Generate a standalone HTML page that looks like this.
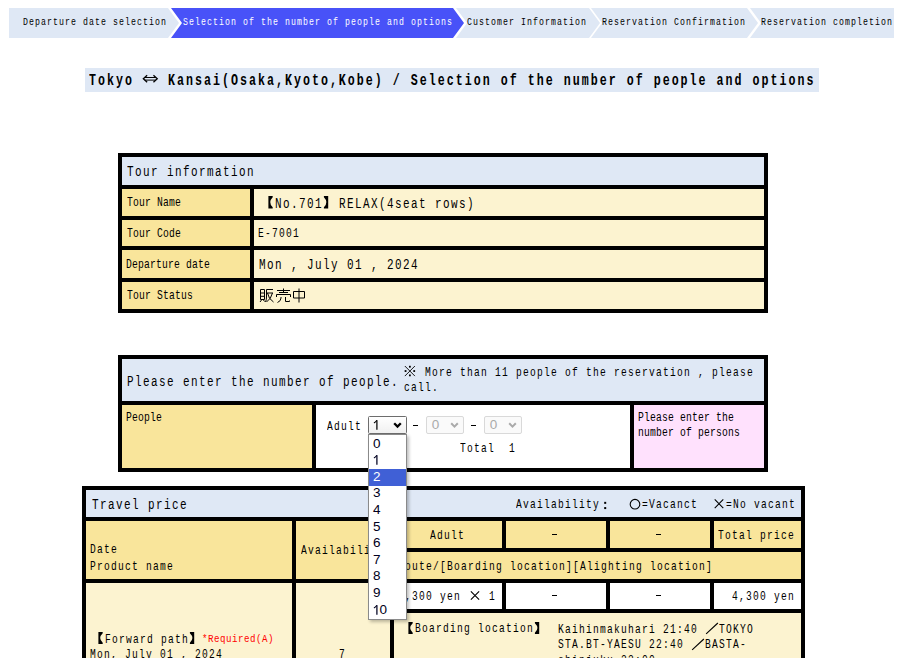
<!DOCTYPE html>
<html><head><meta charset="utf-8"><style>
html,body{margin:0;padding:0;background:#fff;}
body{width:897px;height:658px;overflow:hidden;position:relative;}
.t{position:absolute;white-space:pre;font-family:"Liberation Mono",monospace;line-height:20px;transform-origin:0 0;}
.s{position:absolute;font-family:"Liberation Sans",sans-serif;font-size:13.5px;line-height:16px;}
svg{display:block}
</style></head><body>
<svg style="position:absolute;left:0;top:0" width="897" height="50"><polygon points="9,8 168,8 179,23 168,38 9,38" fill="#dfe8f5"/><polygon points="171,8 453,8 464,23 453,38 171,38 182,23" fill="#4852f8"/><polygon points="456,8 589,8 600,23 589,38 456,38 467,23" fill="#dfe8f5"/><polygon points="591,8 747,8 758,23 747,38 591,38 602,23" fill="#dfe8f5"/><polygon points="750,8 894,8 894,38 750,38 761,23" fill="#dfe8f5"/></svg>
<div class="t" style="left:23.35px;top:12.01px;font-size:10.48px;letter-spacing:1.353px;transform:scaleX(0.7855);color:#000;">Departure date selection</div>
<div class="t" style="left:182.68px;top:12.01px;font-size:10.48px;letter-spacing:1.353px;transform:scaleX(0.7855);color:#ffffff;">Selection of the number of people and options</div>
<div class="t" style="left:467.25px;top:12.01px;font-size:10.48px;letter-spacing:1.353px;transform:scaleX(0.7855);color:#000;">Customer Information</div>
<div class="t" style="left:602.35px;top:12.01px;font-size:10.48px;letter-spacing:1.353px;transform:scaleX(0.7855);color:#000;">Reservation Confirmation</div>
<div class="t" style="left:761.35px;top:12.01px;font-size:10.48px;letter-spacing:1.353px;transform:scaleX(0.7855);color:#000;">Reservation completion</div>
<div style="position:absolute;left:85px;top:68px;width:734px;height:24px;background:#dfe8f5;"></div>
<div class="t" style="left:88.65px;top:70.64px;font-size:15.64px;letter-spacing:2.692px;transform:scaleX(0.7452);color:#000;font-weight:bold;">Tokyo </div>
<svg style="position:absolute;left:142.65px;top:74.50px;overflow:visible" width="16.40" height="7.62" viewBox="0 0 16.40 7.62" fill="none" stroke="#000"><path d="M1.83 2.51 L12.77 2.51 M1.83 5.11 L12.77 5.11" stroke-width="1.0"/><path d="M4.14 0.3 L0.33 3.81 L4.14 7.32 M10.46 0.3 L14.27 3.81 L10.46 7.32" stroke-width="1.3"/></svg>
<div class="t" style="left:159.05px;top:70.64px;font-size:15.64px;letter-spacing:2.692px;transform:scaleX(0.7452);color:#000;font-weight:bold;"> Kansai(Osaka,Kyoto,Kobe) / Selection of the number of people and options</div>
<div style="position:absolute;left:118px;top:153px;width:650px;height:160px;background:#000;"></div>
<div style="position:absolute;left:122px;top:157px;width:642px;height:28px;background:#dfe8f5;"></div>
<div class="t" style="left:127.09px;top:161.90px;font-size:14.67px;letter-spacing:1.894px;transform:scaleX(0.7481);color:#000;">Tour information</div>
<div style="position:absolute;left:122px;top:189px;width:128px;height:27px;background:#f9e59b;"></div>
<div style="position:absolute;left:254px;top:189px;width:510px;height:27px;background:#fcf3d0;"></div>
<div class="t" style="left:126.64px;top:193.35px;font-size:12.57px;letter-spacing:0.222px;transform:scaleX(0.7728);color:#000;">Tour Name</div>
<div style="position:absolute;left:122px;top:220px;width:128px;height:26px;background:#f9e59b;"></div>
<div style="position:absolute;left:254px;top:220px;width:510px;height:26px;background:#fcf3d0;"></div>
<div class="t" style="left:126.64px;top:223.85px;font-size:12.57px;letter-spacing:0.222px;transform:scaleX(0.7728);color:#000;">Tour Code</div>
<div style="position:absolute;left:122px;top:250px;width:128px;height:28px;background:#f9e59b;"></div>
<div style="position:absolute;left:254px;top:250px;width:510px;height:28px;background:#fcf3d0;"></div>
<div class="t" style="left:126.23px;top:254.85px;font-size:12.57px;letter-spacing:0.222px;transform:scaleX(0.7728);color:#000;">Departure date</div>
<div style="position:absolute;left:122px;top:282px;width:128px;height:27px;background:#f9e59b;"></div>
<div style="position:absolute;left:254px;top:282px;width:510px;height:27px;background:#fcf3d0;"></div>
<div class="t" style="left:126.64px;top:286.35px;font-size:12.57px;letter-spacing:0.222px;transform:scaleX(0.7728);color:#000;">Tour Status</div>
<svg style="position:absolute;left:259.00px;top:196.20px;overflow:visible" width="16.00" height="12.50" viewBox="0 0 16.00 12.50" fill="none" stroke="#000"><path d="M9.40 0 L13.70 0 L13.70 1.20 Q8.70 6.25 13.70 11.30 L13.70 12.50 L9.40 12.50 Z" fill="#000" stroke="none"/></svg>
<div class="t" style="left:275.00px;top:193.78px;font-size:13.97px;letter-spacing:1.804px;transform:scaleX(0.7855);color:#000;">No.701</div>
<svg style="position:absolute;left:323.00px;top:196.20px;overflow:visible" width="16.00" height="12.50" viewBox="0 0 16.00 12.50" fill="none" stroke="#000"><path d="M0.90 0 L5.20 0 L5.20 12.50 L0.90 12.50 L0.90 11.30 Q5.90 6.25 0.90 1.20 Z" fill="#000" stroke="none"/></svg>
<div class="t" style="left:339.00px;top:193.78px;font-size:13.97px;letter-spacing:1.804px;transform:scaleX(0.7855);color:#000;">RELAX(4seat rows)</div>
<div class="t" style="left:257.94px;top:223.89px;font-size:13.55px;letter-spacing:1.750px;transform:scaleX(0.7086);color:#000;">E-7001</div>
<div class="t" style="left:258.71px;top:255.08px;font-size:13.97px;letter-spacing:1.804px;transform:scaleX(0.7855);color:#000;">Mon , July 01 , 2024</div>
<svg style="position:absolute;left:258.50px;top:287.90px;overflow:visible" width="16.00" height="16.00" viewBox="0 0 16.00 16.00" fill="none" stroke="#000"><g transform="scale(1.0000)" stroke-width="1.000" ><path d="M1.5 1.5H5.5V11.5H1.5Z M1.5 5H5.5 M1.5 8.3H5.5 M2.5 12L1 14 M4.5 12L5.5 13.5 M7.5 1.5H14 M7.5 1.5V9Q7.5 12 6.5 14 M7.5 5H14 M8.5 5Q9.5 11 14.5 14 M13.5 5Q12 11 7.5 14"/></g></svg>
<svg style="position:absolute;left:274.50px;top:287.90px;overflow:visible" width="16.00" height="16.00" viewBox="0 0 16.00 16.00" fill="none" stroke="#000"><g transform="scale(1.0000)" stroke-width="1.000" ><path d="M8.5 0.5V4 M2 2.5H15 M4 4.5H13 M1.5 6.5H15.5V9 M1.5 6.5V9 M6 9V10Q6 13 2.5 14.5 M10.5 9V13.5H14.5V12.5"/></g></svg>
<svg style="position:absolute;left:290.50px;top:287.90px;overflow:visible" width="16.00" height="16.00" viewBox="0 0 16.00 16.00" fill="none" stroke="#000"><g transform="scale(1.0000)" stroke-width="1.000" ><path d="M2.5 3.5H13.5V10H2.5Z M8 0.5V14.5"/></g></svg>
<div style="position:absolute;left:118px;top:355px;width:650px;height:117px;background:#000;"></div>
<div style="position:absolute;left:122px;top:359px;width:642px;height:42px;background:#dfe8f5;"></div>
<div class="t" style="left:126.73px;top:371.60px;font-size:14.67px;letter-spacing:1.894px;transform:scaleX(0.7481);color:#000;">Please enter the number of people.</div>
<svg style="position:absolute;left:404.00px;top:365.75px;overflow:visible" width="14.00" height="10.08" viewBox="0 0 14.00 10.08" fill="none" stroke="#000"><path d="M0.84 0.00 L10.92 10.08 M10.92 0.00 L0.84 10.08" stroke-width="0.9"/><rect x="4.98" y="-0.19" width="1.8" height="1.8" fill="#000" stroke="none"/><rect x="4.98" y="8.47" width="1.8" height="1.8" fill="#000" stroke="none"/><rect x="0.65" y="4.14" width="1.8" height="1.8" fill="#000" stroke="none"/><rect x="9.31" y="4.14" width="1.8" height="1.8" fill="#000" stroke="none"/></svg>
<div class="t" style="left:418.00px;top:362.77px;font-size:13.27px;letter-spacing:1.714px;transform:scaleX(0.7235);color:#000;"> More than 11 people of the reservation , please</div>
<div class="t" style="left:403.89px;top:378.27px;font-size:13.27px;letter-spacing:1.714px;transform:scaleX(0.7235);color:#000;">call.</div>
<div style="position:absolute;left:122px;top:405px;width:190px;height:63px;background:#f9e59b;"></div>
<div style="position:absolute;left:316px;top:405px;width:314px;height:63px;background:#ffffff;"></div>
<div style="position:absolute;left:634px;top:405px;width:130px;height:63px;background:#ffe1fd;"></div>
<div class="t" style="left:126.23px;top:408.44px;font-size:11.87px;letter-spacing:0.210px;transform:scaleX(0.8183);color:#000;">People</div>
<div class="t" style="left:637.73px;top:408.24px;font-size:11.87px;letter-spacing:0.210px;transform:scaleX(0.8183);color:#000;">Please enter the</div>
<div class="t" style="left:637.65px;top:423.14px;font-size:11.87px;letter-spacing:0.210px;transform:scaleX(0.8183);color:#000;">number of persons</div>
<div class="t" style="left:327.00px;top:417.19px;font-size:13.55px;letter-spacing:1.750px;transform:scaleX(0.7086);color:#000;">Adult</div>
<div class="t" style="left:459.64px;top:439.47px;font-size:13.27px;letter-spacing:1.714px;transform:scaleX(0.7235);color:#000;">Total  1</div>
<div style="position:absolute;left:413px;top:425px;width:5px;height:1px;background:#000;"></div>
<div style="position:absolute;left:471px;top:425px;width:5px;height:1px;background:#000;"></div>
<div style="position:absolute;left:368px;top:416px;width:37px;height:16px;border:1px solid #6d6d6d;border-radius:1.5px;background:linear-gradient(#fff,#f0f0f0)"></div>
<svg style="position:absolute;left:373.30px;top:420.10px;overflow:visible" width="8.00" height="10.00" viewBox="0 0 8.00 10.00" fill="none" stroke="#000"><path d="M3.90 0.2 V9.8" stroke-width="1.25"/><path d="M3.90 0.3 Q2.60 2.2 0.90 2.9" stroke-width="1.1"/></svg>
<svg style="position:absolute;left:392.50px;top:421.50px;overflow:visible" width="9.00" height="7.00" viewBox="0 0 9.00 7.00" fill="none" stroke="#000"><path d="M1.2 1.3L4.5 4.6L7.8 1.3" stroke-width="2.3"/></svg>
<div style="position:absolute;left:426px;top:416px;width:36px;height:16px;border:1px solid #d9d9d9;border-radius:2px;background:#fafafa"></div>
<div class="s" style="left:431.8px;top:417px;color:#aaa">0</div>
<svg style="position:absolute;left:450.20px;top:421.50px;overflow:visible" width="9.50" height="7.00" viewBox="0 0 9.50 7.00" fill="none" stroke="#aaa"><path d="M1.2 1.3L4.5 4.6L7.8 1.3" stroke-width="2"/></svg>
<div style="position:absolute;left:484px;top:416px;width:36px;height:16px;border:1px solid #d9d9d9;border-radius:2px;background:#fafafa"></div>
<div class="s" style="left:489.8px;top:417px;color:#aaa">0</div>
<svg style="position:absolute;left:508.20px;top:421.50px;overflow:visible" width="9.50" height="7.00" viewBox="0 0 9.50 7.00" fill="none" stroke="#aaa"><path d="M1.2 1.3L4.5 4.6L7.8 1.3" stroke-width="2"/></svg>
<div style="position:absolute;left:82px;top:486px;width:723px;height:172px;background:#000;"></div>
<div style="position:absolute;left:86px;top:490px;width:715px;height:27px;background:#dfe8f5;"></div>
<div class="t" style="left:91.59px;top:494.90px;font-size:14.67px;letter-spacing:1.894px;transform:scaleX(0.7481);color:#000;">Travel price</div>
<div class="t" style="left:515.50px;top:495.07px;font-size:13.27px;letter-spacing:1.714px;transform:scaleX(0.7235);color:#000;">Availability</div>
<svg style="position:absolute;left:599.50px;top:499.10px;overflow:visible" width="14.00" height="9.50" viewBox="0 0 14.00 9.50" fill="none" stroke="#000"><rect x="4.20" y="2.85" width="2" height="2" fill="#000" stroke="none"/><rect x="4.20" y="8.07" width="2" height="2" fill="#000" stroke="none"/></svg>
<svg style="position:absolute;left:627.50px;top:498.91px;overflow:visible" width="14.00" height="10.45" viewBox="0 0 14.00 10.45" fill="none" stroke="#000"><circle cx="7.00" cy="5.23" r="4.81" stroke-width="1.1"/></svg>
<div class="t" style="left:641.50px;top:495.07px;font-size:13.27px;letter-spacing:1.714px;transform:scaleX(0.7235);color:#000;">=Vacanct</div>
<svg style="position:absolute;left:711.50px;top:499.39px;overflow:visible" width="14.00" height="9.50" viewBox="0 0 14.00 9.50" fill="none" stroke="#000"><path d="M2.72 0.47 L11.28 9.03 M11.28 0.47 L2.72 9.03" stroke-width="1.1"/></svg>
<div class="t" style="left:725.50px;top:495.07px;font-size:13.27px;letter-spacing:1.714px;transform:scaleX(0.7235);color:#000;">=No vacant</div>
<div style="position:absolute;left:86px;top:521px;width:206px;height:58px;background:#f9e59b;"></div>
<div style="position:absolute;left:296px;top:521px;width:94px;height:58px;background:#f9e59b;"></div>
<div style="position:absolute;left:394px;top:521px;width:108px;height:27px;background:#f9e59b;"></div>
<div style="position:absolute;left:506px;top:521px;width:100px;height:27px;background:#f9e59b;"></div>
<div style="position:absolute;left:610px;top:521px;width:100px;height:27px;background:#f9e59b;"></div>
<div style="position:absolute;left:714px;top:521px;width:87px;height:27px;background:#f9e59b;"></div>
<div style="position:absolute;left:394px;top:552px;width:407px;height:27px;background:#f9e59b;"></div>
<div class="t" style="left:89.94px;top:540.47px;font-size:13.27px;letter-spacing:1.714px;transform:scaleX(0.7235);color:#000;">Date</div>
<div class="t" style="left:89.94px;top:556.67px;font-size:13.27px;letter-spacing:1.714px;transform:scaleX(0.7235);color:#000;">Product name</div>
<div class="t" style="left:300.70px;top:541.02px;font-size:13.27px;letter-spacing:1.714px;transform:scaleX(0.7235);color:#000;">Availability</div>
<div class="t" style="left:429.70px;top:526.07px;font-size:13.27px;letter-spacing:1.714px;transform:scaleX(0.7235);color:#000;">Adult</div>
<div style="position:absolute;left:552px;top:534px;width:5px;height:1px;background:#000;"></div>
<div style="position:absolute;left:656px;top:534px;width:5px;height:1px;background:#000;"></div>
<div class="t" style="left:718.24px;top:526.07px;font-size:13.27px;letter-spacing:1.714px;transform:scaleX(0.7235);color:#000;">Total price</div>
<div class="t" style="left:398.24px;top:557.27px;font-size:13.27px;letter-spacing:1.714px;transform:scaleX(0.7235);color:#000;">Route/[Boarding location][Alighting location]</div>
<div style="position:absolute;left:86px;top:583px;width:206px;height:75px;background:#fcf3d0;"></div>
<div style="position:absolute;left:296px;top:583px;width:94px;height:75px;background:#fcf3d0;"></div>
<div style="position:absolute;left:394px;top:583px;width:108px;height:26px;background:#ffffff;"></div>
<div style="position:absolute;left:506px;top:583px;width:100px;height:26px;background:#ffffff;"></div>
<div style="position:absolute;left:610px;top:583px;width:100px;height:26px;background:#ffffff;"></div>
<div style="position:absolute;left:714px;top:583px;width:87px;height:26px;background:#ffffff;"></div>
<div style="position:absolute;left:394px;top:613px;width:407px;height:45px;background:#fcf3d0;"></div>
<div class="t" style="left:398.32px;top:586.58px;font-size:12.85px;letter-spacing:1.660px;transform:scaleX(0.7471);color:#000;">4,300 yen </div>
<svg style="position:absolute;left:468.32px;top:591.08px;overflow:visible" width="14.00" height="9.20" viewBox="0 0 14.00 9.20" fill="none" stroke="#000"><path d="M2.86 0.46 L11.14 8.74 M11.14 0.46 L2.86 8.74" stroke-width="1.1"/></svg>
<div class="t" style="left:482.32px;top:586.58px;font-size:12.85px;letter-spacing:1.660px;transform:scaleX(0.7471);color:#000;"> 1</div>
<div style="position:absolute;left:552px;top:595px;width:5px;height:1px;background:#000;"></div>
<div style="position:absolute;left:656px;top:595px;width:5px;height:1px;background:#000;"></div>
<div class="t" style="left:732.12px;top:586.58px;font-size:12.85px;letter-spacing:1.660px;transform:scaleX(0.7471);color:#000;">4,300 yen</div>
<svg style="position:absolute;left:401.00px;top:621.56px;overflow:visible" width="14.00" height="11.88" viewBox="0 0 14.00 11.88" fill="none" stroke="#000"><path d="M7.40 0 L11.70 0 L11.70 1.20 Q6.70 5.94 11.70 10.68 L11.70 11.88 L7.40 11.88 Z" fill="#000" stroke="none"/></svg>
<div class="t" style="left:415.00px;top:618.77px;font-size:13.27px;letter-spacing:1.714px;transform:scaleX(0.7235);color:#000;">Boarding location</div>
<svg style="position:absolute;left:534.00px;top:621.56px;overflow:visible" width="14.00" height="11.88" viewBox="0 0 14.00 11.88" fill="none" stroke="#000"><path d="M0.90 0 L5.20 0 L5.20 11.88 L0.90 11.88 L0.90 10.68 Q5.90 5.94 0.90 1.20 Z" fill="#000" stroke="none"/></svg>
<div class="t" style="left:558.04px;top:619.57px;font-size:13.27px;letter-spacing:1.714px;transform:scaleX(0.7235);color:#000;">Kaihinmakuhari 21:40 </div>
<svg style="position:absolute;left:705.04px;top:623.12px;overflow:visible" width="14.00" height="10.92" viewBox="0 0 14.00 10.92" fill="none" stroke="#000"><path d="M1.12 10.92 L12.88 0.00" stroke-width="1.1"/></svg>
<div class="t" style="left:719.04px;top:619.57px;font-size:13.27px;letter-spacing:1.714px;transform:scaleX(0.7235);color:#000;">TOKYO</div>
<div class="t" style="left:558.43px;top:635.47px;font-size:13.27px;letter-spacing:1.714px;transform:scaleX(0.7235);color:#000;">STA.BT-YAESU 22:40 </div>
<svg style="position:absolute;left:691.43px;top:639.02px;overflow:visible" width="14.00" height="10.92" viewBox="0 0 14.00 10.92" fill="none" stroke="#000"><path d="M1.12 10.92 L12.88 0.00" stroke-width="1.1"/></svg>
<div class="t" style="left:705.43px;top:635.47px;font-size:13.27px;letter-spacing:1.714px;transform:scaleX(0.7235);color:#000;">BASTA-</div>
<div class="t" style="left:558.02px;top:651.47px;font-size:13.27px;letter-spacing:1.714px;transform:scaleX(0.7235);color:#000;">shinjuku 23:00</div>
<svg style="position:absolute;left:91.00px;top:632.36px;overflow:visible" width="14.00" height="11.88" viewBox="0 0 14.00 11.88" fill="none" stroke="#000"><path d="M7.40 0 L11.70 0 L11.70 1.20 Q6.70 5.94 11.70 10.68 L11.70 11.88 L7.40 11.88 Z" fill="#000" stroke="none"/></svg>
<div class="t" style="left:105.00px;top:629.57px;font-size:13.27px;letter-spacing:1.714px;transform:scaleX(0.7235);color:#000;">Forward path</div>
<svg style="position:absolute;left:189.00px;top:632.36px;overflow:visible" width="14.00" height="11.88" viewBox="0 0 14.00 11.88" fill="none" stroke="#000"><path d="M0.90 0 L5.20 0 L5.20 11.88 L0.90 11.88 L0.90 10.68 Q5.90 5.94 0.90 1.20 Z" fill="#000" stroke="none"/></svg>
<div class="t" style="left:202.39px;top:629.62px;font-size:10.06px;letter-spacing:0.566px;transform:scaleX(0.9092);color:#ff0000;">*Required(A)</div>
<div class="t" style="left:90.10px;top:645.47px;font-size:13.27px;letter-spacing:1.714px;transform:scaleX(0.7235);color:#000;">Mon, July 01 , 2024</div>
<div class="t" style="left:338.56px;top:645.47px;font-size:13.27px;letter-spacing:1.714px;transform:scaleX(0.7235);color:#000;">7</div>
<div style="position:absolute;left:368px;top:434px;width:37px;height:184px;border:1px solid #8a8a8a;background:#fff;box-shadow:2px 2px 3px rgba(0,0,0,0.25)"></div>
<div style="position:absolute;left:369px;top:469px;width:37px;height:16.6px;background:#4060d6"></div>
<div class="s" style="left:373px;top:435.60px;color:#000020">0</div>
<svg style="position:absolute;left:372.50px;top:455.30px;overflow:visible" width="8.00" height="10.00" viewBox="0 0 8.00 10.00" fill="none" stroke="#000020"><path d="M3.90 0.2 V9.8" stroke-width="1.25"/><path d="M3.90 0.3 Q2.60 2.2 0.90 2.9" stroke-width="1.1"/></svg>
<div class="s" style="left:373px;top:468.80px;color:#fff">2</div>
<div class="s" style="left:373px;top:485.40px;color:#000020">3</div>
<div class="s" style="left:373px;top:502.00px;color:#000020">4</div>
<div class="s" style="left:373px;top:518.60px;color:#000020">5</div>
<div class="s" style="left:373px;top:535.20px;color:#000020">6</div>
<div class="s" style="left:373px;top:551.80px;color:#000020">7</div>
<div class="s" style="left:373px;top:568.40px;color:#000020">8</div>
<div class="s" style="left:373px;top:585.00px;color:#000020">9</div>
<svg style="position:absolute;left:372.50px;top:604.70px;overflow:visible" width="8.00" height="10.00" viewBox="0 0 8.00 10.00" fill="none" stroke="#000020"><path d="M3.90 0.2 V9.8" stroke-width="1.25"/><path d="M3.90 0.3 Q2.60 2.2 0.90 2.9" stroke-width="1.1"/></svg>
<div class="s" style="left:379.5px;top:601.60px;color:#000020">0</div>
</body></html>
